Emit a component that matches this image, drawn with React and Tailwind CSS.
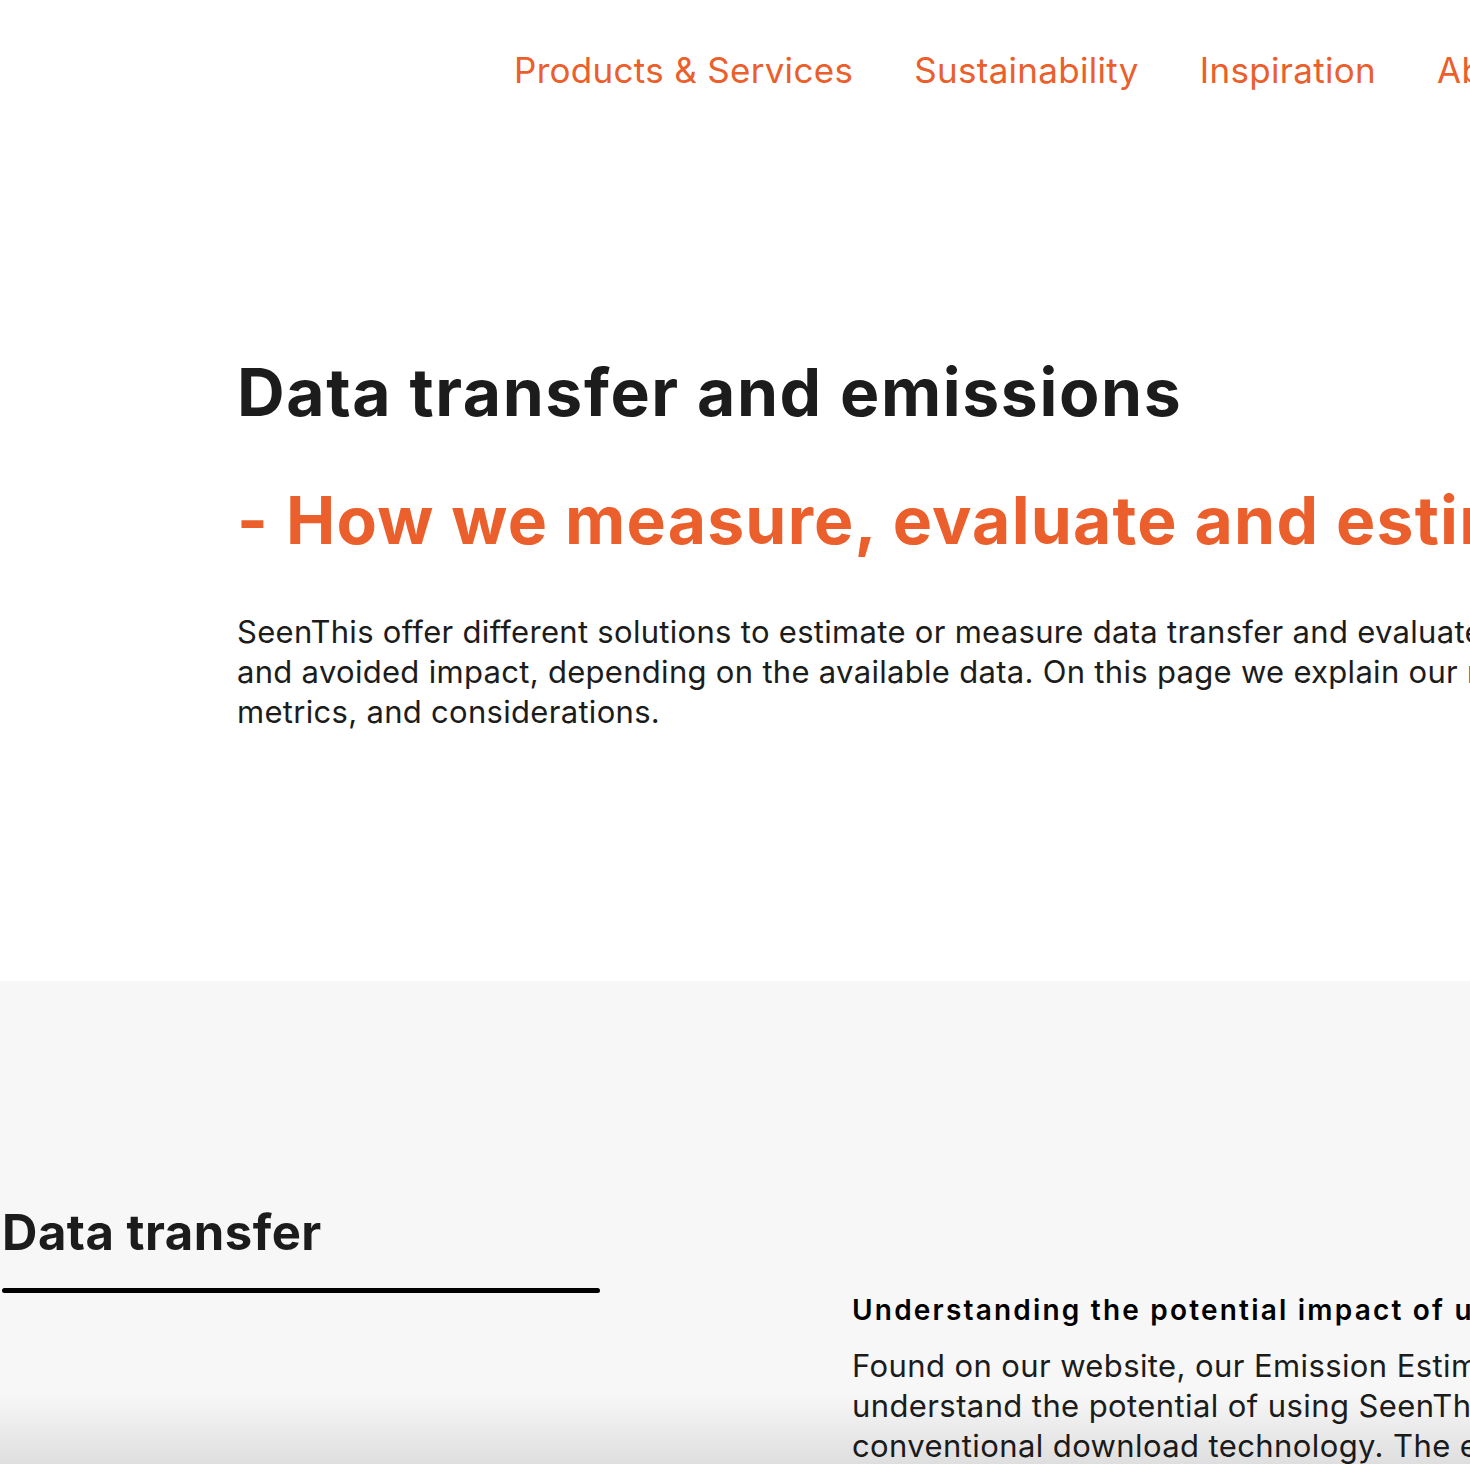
export default function App() {
  const navItems = ['Products & Services', 'Sustainability', 'Inspiration', 'About'];

  return (
    <div className="relative w-[1470px] h-[1464px] overflow-hidden bg-white font-['Inter',sans-serif] text-[#1c1c1c]">
      {/* Top navigation */}
      <nav className="flex gap-[62px] pl-[514px] pt-[47px] h-[981px] flex-col">
        <ul className="flex gap-[61px] whitespace-nowrap">
          {navItems.map((item) => (
            <li key={item} className="text-[35px] leading-[46px] text-[#ea5f2c] tracking-[0.3px]">
              {item}
            </li>
          ))}
        </ul>
      </nav>

      {/* Hero */}
      <header className="absolute left-[237px] top-[352px] whitespace-nowrap">
        <h1 className="text-[66px] leading-[80px] font-bold tracking-[1.6px]">Data transfer and emissions</h1>
        <h2 className="mt-[48px] text-[66px] leading-[80px] font-bold text-[#ea5f2c] tracking-[1.2px]">
          - How we measure, evaluate and estimate emissions
        </h2>
        <p className="mt-[52px] text-[31px] leading-[40px] tracking-[0.3px]">
          SeenThis offer different solutions to estimate or measure data transfer and evaluate emissions
          <br />
          and avoided impact, depending on the available data. On this page we explain our methods,
          <br />
          metrics, and considerations.
        </p>
      </header>

      {/* Data transfer section */}
      <section className="bg-[#f7f7f7] h-[483px] flex pt-[222px]">
        <div className="w-[852px] shrink-0">
          <h3 className="pl-[2px] text-[49px] leading-[60px] font-bold tracking-[0.5px]">Data transfer</h3>
          <div className="mt-[25px] ml-[2px] w-[598px] h-[5px] rounded-full bg-black" />
        </div>
        <div className="pt-[89px] whitespace-nowrap">
          <h4 className="text-[28px] leading-[36px] font-semibold tracking-[2.2px] text-black">
            Understanding the potential impact of using SeenThis
          </h4>
          <p className="mt-[18px] text-[31px] leading-[40px] tracking-[0.4px]">
            Found on our website, our Emission Estimator helps advertisers and agencies
            <br />
            understand the potential of using SeenThis streaming technology compared to
            <br />
            conventional download technology. The estimator is based on
          </p>
        </div>
      </section>

      {/* bottom shade */}
      <div className="absolute left-0 right-0 bottom-0 h-[70px] bg-gradient-to-b from-transparent to-black/10 pointer-events-none" />
    </div>
  );
}
